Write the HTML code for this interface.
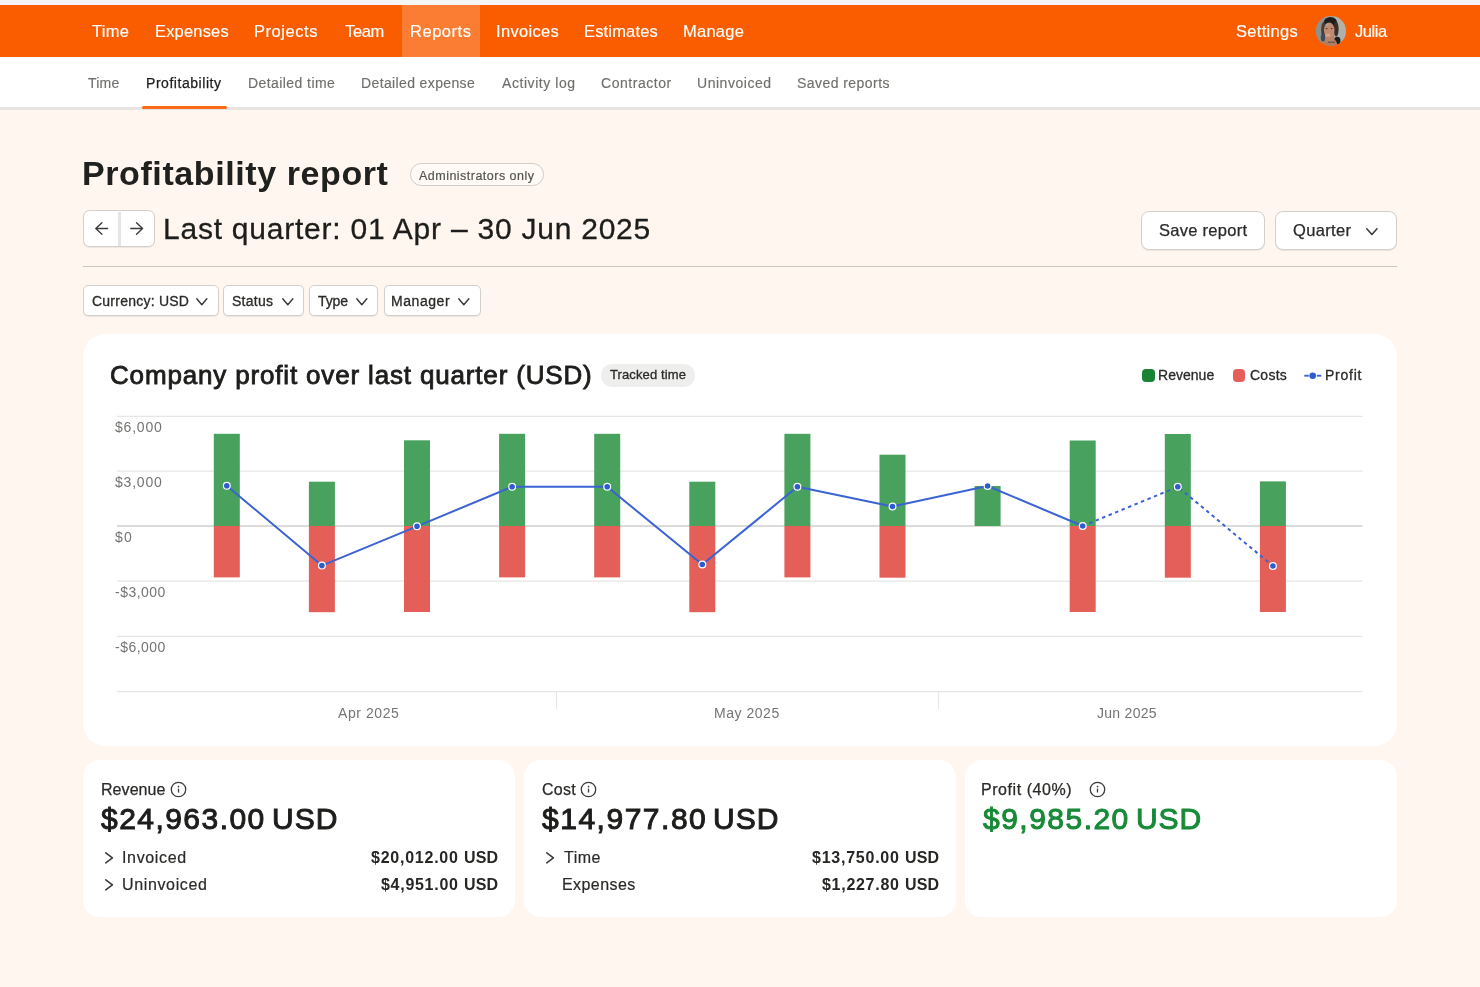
<!DOCTYPE html>
<html lang="en"><head><meta charset="utf-8"><title>Profitability report</title>
<style>
html,body{margin:0;padding:0;}
body{width:1480px;height:987px;overflow:hidden;position:relative;background:#fff6f0;font-family:"Liberation Sans",Arial,sans-serif;}
.t{will-change:transform;position:absolute;white-space:pre;display:block;}
.abs{position:absolute;box-sizing:border-box;}
.btn{position:absolute;box-sizing:border-box;background:#fff;border:1px solid #d3d0cc;border-radius:6px;box-shadow:0 1px 1px rgba(0,0,0,.07);}
.card{position:absolute;background:#fff;}
svg{position:absolute;overflow:visible;}

</style></head>
<body>
<div class="abs" style="left:0;top:0;width:1480px;height:5px;background:#f5f5f5"></div>
<div class="abs" style="left:0;top:5px;width:1480px;height:51.5px;background:#fa5d00"></div>
<div class="abs" style="left:402px;top:5px;width:78px;height:51.5px;background:#fb7d33"></div>
<div class="abs" style="left:0;top:56.5px;width:1480px;height:50.5px;background:#fff"></div>
<div class="abs" style="left:0;top:107px;width:1480px;height:2.5px;background:#e6e3e0"></div>
<div class="abs" style="left:142px;top:106px;width:85px;height:3px;background:#fb6a14;border-radius:1.5px"></div>
<svg style="left:1316px;top:16px" width="30" height="30" viewBox="0 0 30 30">
  <defs><clipPath id="av"><circle cx="15" cy="15" r="14.9"/></clipPath>
  <filter id="avb" x="-20%" y="-20%" width="140%" height="140%"><feGaussianBlur stdDeviation="0.75"/></filter></defs>
  <g clip-path="url(#av)">
    <rect x="-4" y="-4" width="38" height="38" fill="#a3a39c"/>
    <g filter="url(#avb)">
    <rect x="-4" y="-4" width="14" height="38" fill="#8b9295"/>
    <rect x="19" y="-4" width="15" height="38" fill="#b4b2a8"/>
    <rect x="22" y="14" width="12" height="20" fill="#aeb0af"/>
    <ellipse cx="14.4" cy="6.4" rx="6.6" ry="5.4" fill="#1f1c1b"/>
    <ellipse cx="7.6" cy="14" rx="2.4" ry="8" fill="#4b3b36"/>
    <ellipse cx="20.2" cy="13" rx="2.4" ry="7.5" fill="#3b2d28"/>
    <ellipse cx="21.3" cy="24.8" rx="3.2" ry="4" fill="#231d1b"/>
    <ellipse cx="7" cy="21.500" rx="2.200" ry="4" fill="#3f4c53"/>
    <path d="M5 31 Q7 24 12 23 L18 23 Q21 25 22 31 Z" fill="#b27c5e"/>
    <rect x="9.500" y="17" width="8.500" height="9" fill="#b9836a"/>
    <ellipse cx="13.2" cy="14" rx="5.300" ry="7.4" fill="#c18b70"/>
    <ellipse cx="11.800" cy="19.200" rx="2.400" ry="1.600" fill="#dba18e"/>
    <ellipse cx="11.3" cy="8.6" rx="1.600" ry="1.200" fill="#a9a79c"/>
    <ellipse cx="10.6" cy="12.6" rx="1.100" ry="0.600" fill="#5d4035"/>
    <ellipse cx="15.6" cy="12.6" rx="1.100" ry="0.600" fill="#5d4035"/>
    <rect x="12" y="25.500" width="7" height="1.400" fill="#6d5a52"/>
    </g>
  </g>
</svg>
<div class="abs" style="left:410.3px;top:163.2px;width:134.2px;height:22.6px;border:1.2px solid #d0ccc7;border-radius:11.3px;background:#fffaf6"></div>
<div class="btn" style="left:83.2px;top:210.4px;width:72px;height:36.8px;border-radius:6.5px;border-width:1.3px"></div>
<div class="abs" style="left:118.4px;top:211.6px;width:2.2px;height:34.4px;background:#e6e5e3"></div>
<svg style="left:0;top:0" width="200" height="260" viewBox="0 0 200 260" fill="none" stroke="#3a3a38" stroke-width="1.35" stroke-linecap="round" stroke-linejoin="round"><path d="M107.600 228.500H95.800M101.900 222.800L95.800 228.500l6.100 5.700"/><path d="M130.800 228.500h11.800M136.500 222.800l6.100 5.700-6.100 5.700"/></svg>
<div class="btn" style="left:1141px;top:210.5px;width:124px;height:39.5px;border-radius:8px"></div>
<div class="btn" style="left:1275px;top:210.5px;width:121.5px;height:39.5px;border-radius:8px"></div>
<svg style="left:1365.6px;top:227.8px" width="11.8" height="7.2" viewBox="0 0 11.8 7.2" fill="none" stroke="#3a3a38" stroke-width="1.55" stroke-linecap="round" stroke-linejoin="round"><path d="M0.775 0.775L5.9 6.425L11.025 0.775"/></svg>
<div class="abs" style="left:83px;top:266.2px;width:1314px;height:1.2px;background:#cbc6c0"></div>
<div class="btn" style="left:83.2px;top:285.2px;width:135.4px;height:31.2px;border-radius:5px;border-width:1.2px"></div>
<div class="btn" style="left:223.4px;top:285.2px;width:80.7px;height:31.2px;border-radius:5px;border-width:1.2px"></div>
<div class="btn" style="left:309.2px;top:285.2px;width:69.2px;height:31.2px;border-radius:5px;border-width:1.2px"></div>
<div class="btn" style="left:384px;top:285.2px;width:96.5px;height:31.2px;border-radius:5px;border-width:1.2px"></div>
<svg style="left:196.1px;top:297.6px" width="11.6" height="7.4" viewBox="0 0 11.6 7.4" fill="none" stroke="#3a3a38" stroke-width="1.45" stroke-linecap="round" stroke-linejoin="round"><path d="M0.725 0.725L5.8 6.675000000000001L10.875 0.725"/></svg>
<svg style="left:281.5px;top:297.6px" width="11.6" height="7.4" viewBox="0 0 11.6 7.4" fill="none" stroke="#3a3a38" stroke-width="1.45" stroke-linecap="round" stroke-linejoin="round"><path d="M0.725 0.725L5.8 6.675000000000001L10.875 0.725"/></svg>
<svg style="left:356.2px;top:297.6px" width="11.6" height="7.4" viewBox="0 0 11.6 7.4" fill="none" stroke="#3a3a38" stroke-width="1.45" stroke-linecap="round" stroke-linejoin="round"><path d="M0.725 0.725L5.8 6.675000000000001L10.875 0.725"/></svg>
<svg style="left:458.2px;top:297.6px" width="11.6" height="7.4" viewBox="0 0 11.6 7.4" fill="none" stroke="#3a3a38" stroke-width="1.45" stroke-linecap="round" stroke-linejoin="round"><path d="M0.725 0.725L5.8 6.675000000000001L10.875 0.725"/></svg>
<div class="card" style="left:83px;top:333.5px;width:1313.5px;height:412.5px;border-radius:22px"></div>
<div class="abs" style="left:600.5px;top:364px;width:94.9px;height:22.5px;border-radius:11.3px;background:#eeeeed"></div>
<div class="abs" style="left:1142px;top:368.7px;width:12.5px;height:13.5px;border-radius:4px;background:#188433"></div>
<div class="abs" style="left:1232.5px;top:368.7px;width:12.5px;height:13.5px;border-radius:4px;background:#e45f58"></div>
<svg style="left:0;top:0" width="1480" height="987" viewBox="0 0 1480 987">
  <g stroke="#e6e6e5" stroke-width="1.2">
    <line x1="117" x2="1362.500" y1="416.3" y2="416.3"/>
    <line x1="117" x2="1362.500" y1="471.2" y2="471.2"/>
    <line x1="117" x2="1362.500" y1="581.2" y2="581.2"/>
    <line x1="117" x2="1362.500" y1="636.4" y2="636.4"/>
    <line x1="117" x2="1362.500" y1="691.6" y2="691.6"/>
    <line x1="556.5" x2="556.5" y1="691.6" y2="709"/>
    <line x1="938.5" x2="938.5" y1="691.6" y2="709"/>
  </g>
  <line x1="117" x2="1362.500" y1="526" y2="526" stroke="#cfcfce" stroke-width="1.5"/>
  <g><rect x="213.8" y="433.8" width="26" height="92.2" fill="#48a15c"/><rect x="213.8" y="526" width="26" height="51.4" fill="#e45f58"/><rect x="308.9" y="481.7" width="26" height="44.3" fill="#48a15c"/><rect x="308.9" y="526" width="26" height="86.2" fill="#e45f58"/><rect x="404.0" y="440.3" width="26" height="85.7" fill="#48a15c"/><rect x="404.0" y="526" width="26" height="86.0" fill="#e45f58"/><rect x="499.1" y="433.8" width="26" height="92.2" fill="#48a15c"/><rect x="499.1" y="526" width="26" height="51.4" fill="#e45f58"/><rect x="594.2" y="433.8" width="26" height="92.2" fill="#48a15c"/><rect x="594.2" y="526" width="26" height="51.4" fill="#e45f58"/><rect x="689.3" y="481.7" width="26" height="44.3" fill="#48a15c"/><rect x="689.3" y="526" width="26" height="86.2" fill="#e45f58"/><rect x="784.4" y="433.8" width="26" height="92.2" fill="#48a15c"/><rect x="784.4" y="526" width="26" height="51.4" fill="#e45f58"/><rect x="879.5" y="454.7" width="26" height="71.3" fill="#48a15c"/><rect x="879.5" y="526" width="26" height="51.7" fill="#e45f58"/><rect x="974.6" y="486" width="26" height="40.0" fill="#48a15c"/><rect x="1069.7" y="440.5" width="26" height="85.5" fill="#48a15c"/><rect x="1069.7" y="526" width="26" height="86.0" fill="#e45f58"/><rect x="1164.8" y="434" width="26" height="92.0" fill="#48a15c"/><rect x="1164.8" y="526" width="26" height="51.7" fill="#e45f58"/><rect x="1259.9" y="481.4" width="26" height="44.6" fill="#48a15c"/><rect x="1259.9" y="526" width="26" height="86.0" fill="#e45f58"/></g>
  <polyline fill="none" stroke="#3b63d1" stroke-width="2" stroke-linejoin="round" points="226.8,485.7 321.9,565.6 417.0,526.3 512.1,486.8 607.2,486.8 702.3,564.5 797.4,486.8 892.5,506.5 987.6,486 1082.7,526"/>
  <polyline fill="none" stroke="#3b63d1" stroke-width="2" stroke-dasharray="3.5 3.5" points="1082.7,526 1177.8,486.8 1272.9,566"/>
  <g fill="#2f5bd0" stroke="#ffffff" stroke-width="1.2"><circle cx="226.8" cy="485.7" r="3.4"/><circle cx="321.9" cy="565.6" r="3.4"/><circle cx="417.0" cy="526.3" r="3.4"/><circle cx="512.1" cy="486.8" r="3.4"/><circle cx="607.2" cy="486.8" r="3.4"/><circle cx="702.3" cy="564.5" r="3.4"/><circle cx="797.4" cy="486.8" r="3.4"/><circle cx="892.5" cy="506.5" r="3.4"/><circle cx="987.6" cy="486" r="3.4"/><circle cx="1082.7" cy="526" r="3.4"/><circle cx="1177.8" cy="486.8" r="3.4"/><circle cx="1272.9" cy="566" r="3.4"/></g>
  <g stroke="#3b63d1" stroke-width="1.9"><line x1="1304.300" x2="1308.800" y1="375.700" y2="375.700"/><line x1="1316.800" x2="1321.300" y1="375.700" y2="375.700"/></g>
  <circle cx="1312.700" cy="375.700" r="3.300" fill="#2f5bd0"/>
</svg>
<div class="card" style="left:83px;top:760px;width:432px;height:156.500px;border-radius:17px"></div>
<div class="card" style="left:524px;top:760px;width:432px;height:156.500px;border-radius:17px"></div>
<div class="card" style="left:964.5px;top:760px;width:432px;height:156.500px;border-radius:17px"></div>
<svg style="left:169.9px;top:780.9px" width="17" height="17" viewBox="0 0 17 17"><circle cx="8.5" cy="8.5" r="7.2" fill="none" stroke="#3a3a38" stroke-width="1.3"/><rect x="7.85" y="7.6" width="1.3" height="3.9" fill="#3a3a38"/><circle cx="8.5" cy="5.6" r="0.85" fill="#3a3a38"/></svg>
<svg style="left:580.3px;top:780.9px" width="17" height="17" viewBox="0 0 17 17"><circle cx="8.5" cy="8.5" r="7.2" fill="none" stroke="#3a3a38" stroke-width="1.3"/><rect x="7.85" y="7.6" width="1.3" height="3.9" fill="#3a3a38"/><circle cx="8.5" cy="5.6" r="0.85" fill="#3a3a38"/></svg>
<svg style="left:1088.8px;top:780.9px" width="17" height="17" viewBox="0 0 17 17"><circle cx="8.5" cy="8.5" r="7.2" fill="none" stroke="#3a3a38" stroke-width="1.3"/><rect x="7.85" y="7.6" width="1.3" height="3.9" fill="#3a3a38"/><circle cx="8.5" cy="5.6" r="0.85" fill="#3a3a38"/></svg>
<svg style="left:104.7px;top:851.7px" width="8.2" height="11.6" viewBox="0 0 8.2 11.6" fill="none" stroke="#3a3a38" stroke-width="1.55" stroke-linecap="round" stroke-linejoin="round"><path d="M0.775 0.775L7.424999999999999 5.8L0.775 10.825"/></svg>
<svg style="left:104.7px;top:878.8px" width="8.2" height="11.6" viewBox="0 0 8.2 11.6" fill="none" stroke="#3a3a38" stroke-width="1.55" stroke-linecap="round" stroke-linejoin="round"><path d="M0.775 0.775L7.424999999999999 5.8L0.775 10.825"/></svg>
<svg style="left:545.8px;top:851.7px" width="8.2" height="11.6" viewBox="0 0 8.2 11.6" fill="none" stroke="#3a3a38" stroke-width="1.55" stroke-linecap="round" stroke-linejoin="round"><path d="M0.775 0.775L7.424999999999999 5.8L0.775 10.825"/></svg>

<span class="t" style="left:92.20px;top:20px;font-size:16.5px;line-height:22px;height:22px;font-weight:400;color:#ffffff;letter-spacing:0.274px;-webkit-text-stroke:0.15px #ffffff;">Time</span>
<span class="t" style="left:154.70px;top:20px;font-size:16.5px;line-height:22px;height:22px;font-weight:400;color:#ffffff;letter-spacing:0.170px;-webkit-text-stroke:0.15px #ffffff;">Expenses</span>
<span class="t" style="left:254.10px;top:20px;font-size:16.5px;line-height:22px;height:22px;font-weight:400;color:#ffffff;letter-spacing:0.550px;-webkit-text-stroke:0.15px #ffffff;">Projects</span>
<span class="t" style="left:345.40px;top:20px;font-size:16.5px;line-height:22px;height:22px;font-weight:400;color:#ffffff;letter-spacing:-0.334px;-webkit-text-stroke:0.15px #ffffff;">Team</span>
<span class="t" style="left:409.80px;top:20px;font-size:16.5px;line-height:22px;height:22px;font-weight:400;color:#ffffff;letter-spacing:0.529px;-webkit-text-stroke:0.15px #ffffff;">Reports</span>
<span class="t" style="left:495.80px;top:20px;font-size:16.5px;line-height:22px;height:22px;font-weight:400;color:#ffffff;letter-spacing:0.317px;-webkit-text-stroke:0.15px #ffffff;">Invoices</span>
<span class="t" style="left:584.10px;top:20px;font-size:16.5px;line-height:22px;height:22px;font-weight:400;color:#ffffff;letter-spacing:0.164px;-webkit-text-stroke:0.15px #ffffff;">Estimates</span>
<span class="t" style="left:683.40px;top:20px;font-size:16.5px;line-height:22px;height:22px;font-weight:400;color:#ffffff;letter-spacing:0.250px;-webkit-text-stroke:0.15px #ffffff;">Manage</span>
<span class="t" style="left:1236.40px;top:20px;font-size:16.5px;line-height:22px;height:22px;font-weight:400;color:#ffffff;letter-spacing:0.290px;-webkit-text-stroke:0.15px #ffffff;">Settings</span>
<span class="t" style="left:1355.00px;top:20px;font-size:16.5px;line-height:22px;height:22px;font-weight:400;color:#ffffff;letter-spacing:-0.440px;-webkit-text-stroke:0.15px #ffffff;">Julia</span>
<span class="t" style="left:88.10px;top:73px;font-size:14px;line-height:20px;height:20px;font-weight:400;color:#6f6f6c;letter-spacing:0.198px;-webkit-text-stroke:0.15px #6f6f6c;">Time</span>
<span class="t" style="left:247.60px;top:73px;font-size:14px;line-height:20px;height:20px;font-weight:400;color:#6f6f6c;letter-spacing:0.424px;-webkit-text-stroke:0.15px #6f6f6c;">Detailed time</span>
<span class="t" style="left:360.60px;top:73px;font-size:14px;line-height:20px;height:20px;font-weight:400;color:#6f6f6c;letter-spacing:0.373px;-webkit-text-stroke:0.15px #6f6f6c;">Detailed expense</span>
<span class="t" style="left:501.50px;top:73px;font-size:14px;line-height:20px;height:20px;font-weight:400;color:#6f6f6c;letter-spacing:0.561px;-webkit-text-stroke:0.15px #6f6f6c;">Activity log</span>
<span class="t" style="left:601.10px;top:73px;font-size:14px;line-height:20px;height:20px;font-weight:400;color:#6f6f6c;letter-spacing:0.534px;-webkit-text-stroke:0.15px #6f6f6c;">Contractor</span>
<span class="t" style="left:697.30px;top:73px;font-size:14px;line-height:20px;height:20px;font-weight:400;color:#6f6f6c;letter-spacing:0.536px;-webkit-text-stroke:0.15px #6f6f6c;">Uninvoiced</span>
<span class="t" style="left:797.30px;top:73px;font-size:14px;line-height:20px;height:20px;font-weight:400;color:#6f6f6c;letter-spacing:0.445px;-webkit-text-stroke:0.15px #6f6f6c;">Saved reports</span>
<span class="t" style="left:146.00px;top:73px;font-size:14px;line-height:20px;height:20px;font-weight:400;color:#1d1e1c;letter-spacing:0.544px;-webkit-text-stroke:0.25px #1d1e1c;">Profitability</span>
<span class="t" style="left:81.80px;top:152px;font-size:34px;line-height:42px;height:42px;font-weight:700;color:#20211f;letter-spacing:0.591px;">Profitability report</span>
<span class="t" style="left:419.20px;top:167px;font-size:12.5px;line-height:18px;height:18px;font-weight:400;color:#55554f;letter-spacing:0.481px;-webkit-text-stroke:0.2px #55554f;">Administrators only</span>
<span class="t" style="left:163.40px;top:210px;font-size:30px;line-height:37px;height:37px;font-weight:400;color:#1d1e1c;letter-spacing:0.765px;-webkit-text-stroke:0.3px #1d1e1c;">Last quarter: 01 Apr – 30 Jun 2025</span>
<span class="t" style="left:1158.50px;top:219px;font-size:16.5px;line-height:22px;height:22px;font-weight:400;color:#2a2a28;letter-spacing:0.279px;-webkit-text-stroke:0.25px #2a2a28;">Save report</span>
<span class="t" style="left:1292.50px;top:219px;font-size:16.5px;line-height:22px;height:22px;font-weight:400;color:#2a2a28;letter-spacing:0.343px;-webkit-text-stroke:0.25px #2a2a28;">Quarter</span>
<span class="t" style="left:91.60px;top:291px;font-size:14px;line-height:20px;height:20px;font-weight:400;color:#2a2a28;letter-spacing:0.232px;-webkit-text-stroke:0.3px #2a2a28;">Currency: USD</span>
<span class="t" style="left:232.10px;top:291px;font-size:14px;line-height:20px;height:20px;font-weight:400;color:#2a2a28;letter-spacing:0.282px;-webkit-text-stroke:0.3px #2a2a28;">Status</span>
<span class="t" style="left:318.20px;top:291px;font-size:14px;line-height:20px;height:20px;font-weight:400;color:#2a2a28;letter-spacing:-0.122px;-webkit-text-stroke:0.3px #2a2a28;">Type</span>
<span class="t" style="left:391.10px;top:291px;font-size:14px;line-height:20px;height:20px;font-weight:400;color:#2a2a28;letter-spacing:0.551px;-webkit-text-stroke:0.3px #2a2a28;">Manager</span>
<span class="t" style="left:109.80px;top:358px;font-size:26px;line-height:34px;height:34px;font-weight:400;color:#1d1e1c;letter-spacing:0.836px;-webkit-text-stroke:0.85px #1d1e1c;">Company profit over last quarter (USD)</span>
<span class="t" style="left:609.80px;top:365px;font-size:13px;line-height:19px;height:19px;font-weight:400;color:#2a2a28;letter-spacing:0.117px;-webkit-text-stroke:0.3px #2a2a28;">Tracked time</span>
<span class="t" style="left:1157.80px;top:365px;font-size:14px;line-height:20px;height:20px;font-weight:400;color:#2a2a28;letter-spacing:0.024px;-webkit-text-stroke:0.3px #2a2a28;">Revenue</span>
<span class="t" style="left:1249.60px;top:365px;font-size:14px;line-height:20px;height:20px;font-weight:400;color:#2a2a28;letter-spacing:0.253px;-webkit-text-stroke:0.3px #2a2a28;">Costs</span>
<span class="t" style="left:1325.00px;top:365px;font-size:14px;line-height:20px;height:20px;font-weight:400;color:#2a2a28;letter-spacing:0.763px;-webkit-text-stroke:0.3px #2a2a28;">Profit</span>
<span class="t" style="left:114.50px;top:417px;font-size:14px;line-height:20px;height:20px;font-weight:400;color:#747472;letter-spacing:0.793px;">$6,000</span>
<span class="t" style="left:114.50px;top:472px;font-size:14px;line-height:20px;height:20px;font-weight:400;color:#747472;letter-spacing:0.793px;">$3,000</span>
<span class="t" style="left:114.50px;top:527px;font-size:14px;line-height:20px;height:20px;font-weight:400;color:#747472;letter-spacing:1.214px;">$0</span>
<span class="t" style="left:114.50px;top:582px;font-size:14px;line-height:20px;height:20px;font-weight:400;color:#747472;letter-spacing:0.467px;">-$3,000</span>
<span class="t" style="left:114.50px;top:637px;font-size:14px;line-height:20px;height:20px;font-weight:400;color:#747472;letter-spacing:0.467px;">-$6,000</span>
<span class="t" style="left:337.70px;top:703px;font-size:14px;line-height:20px;height:20px;font-weight:400;color:#747472;letter-spacing:0.567px;">Apr 2025</span>
<span class="t" style="left:714.30px;top:703px;font-size:14px;line-height:20px;height:20px;font-weight:400;color:#747472;letter-spacing:0.529px;">May 2025</span>
<span class="t" style="left:1096.50px;top:703px;font-size:14px;line-height:20px;height:20px;font-weight:400;color:#747472;letter-spacing:0.283px;">Jun 2025</span>
<span class="t" style="left:100.50px;top:779px;font-size:16px;line-height:21px;height:21px;font-weight:400;color:#2a2a28;letter-spacing:0.059px;-webkit-text-stroke:0.25px #2a2a28;">Revenue</span>
<span class="t" style="left:101.30px;top:800px;font-size:30px;line-height:37px;height:37px;font-weight:400;color:#1d1e1c;letter-spacing:1.460px;-webkit-text-stroke:1.0px #1d1e1c;">$24,963.00</span>
<span class="t" style="left:272.10px;top:800px;font-size:30px;line-height:37px;height:37px;font-weight:400;color:#1d1e1c;letter-spacing:1.013px;-webkit-text-stroke:1.0px #1d1e1c;">USD</span>
<span class="t" style="left:121.60px;top:847px;font-size:16px;line-height:21px;height:21px;font-weight:400;color:#2a2a28;letter-spacing:0.644px;-webkit-text-stroke:0.2px #2a2a28;">Invoiced</span>
<span class="t" style="left:121.60px;top:874px;font-size:16px;line-height:21px;height:21px;font-weight:400;color:#2a2a28;letter-spacing:0.638px;-webkit-text-stroke:0.2px #2a2a28;">Uninvoiced</span>
<span class="t" style="left:370.80px;top:847px;font-size:16px;line-height:21px;height:21px;font-weight:700;color:#262624;letter-spacing:0.758px;">$20,012.00</span>
<span class="t" style="left:463.80px;top:847px;font-size:16px;line-height:21px;height:21px;font-weight:700;color:#262624;letter-spacing:0.137px;">USD</span>
<span class="t" style="left:380.80px;top:874px;font-size:16px;line-height:21px;height:21px;font-weight:700;color:#262624;letter-spacing:0.715px;">$4,951.00</span>
<span class="t" style="left:463.80px;top:874px;font-size:16px;line-height:21px;height:21px;font-weight:700;color:#262624;letter-spacing:0.137px;">USD</span>
<span class="t" style="left:541.70px;top:779px;font-size:16px;line-height:21px;height:21px;font-weight:400;color:#2a2a28;letter-spacing:0.249px;-webkit-text-stroke:0.25px #2a2a28;">Cost</span>
<span class="t" style="left:542.00px;top:800px;font-size:30px;line-height:37px;height:37px;font-weight:400;color:#1d1e1c;letter-spacing:1.515px;-webkit-text-stroke:1.0px #1d1e1c;">$14,977.80</span>
<span class="t" style="left:713.10px;top:800px;font-size:30px;line-height:37px;height:37px;font-weight:400;color:#1d1e1c;letter-spacing:1.013px;-webkit-text-stroke:1.0px #1d1e1c;">USD</span>
<span class="t" style="left:563.50px;top:847px;font-size:16px;line-height:21px;height:21px;font-weight:400;color:#2a2a28;letter-spacing:0.513px;-webkit-text-stroke:0.2px #2a2a28;">Time</span>
<span class="t" style="left:562.00px;top:874px;font-size:16px;line-height:21px;height:21px;font-weight:400;color:#2a2a28;letter-spacing:0.433px;-webkit-text-stroke:0.2px #2a2a28;">Expenses</span>
<span class="t" style="left:811.80px;top:847px;font-size:16px;line-height:21px;height:21px;font-weight:700;color:#262624;letter-spacing:0.758px;">$13,750.00</span>
<span class="t" style="left:904.80px;top:847px;font-size:16px;line-height:21px;height:21px;font-weight:700;color:#262624;letter-spacing:0.137px;">USD</span>
<span class="t" style="left:821.80px;top:874px;font-size:16px;line-height:21px;height:21px;font-weight:700;color:#262624;letter-spacing:0.715px;">$1,227.80</span>
<span class="t" style="left:904.80px;top:874px;font-size:16px;line-height:21px;height:21px;font-weight:700;color:#262624;letter-spacing:0.137px;">USD</span>
<span class="t" style="left:981.40px;top:779px;font-size:16px;line-height:21px;height:21px;font-weight:400;color:#2a2a28;letter-spacing:0.551px;-webkit-text-stroke:0.25px #2a2a28;">Profit (40%)</span>
<span class="t" style="left:982.90px;top:800px;font-size:30px;line-height:37px;height:37px;font-weight:400;color:#188a38;letter-spacing:1.478px;-webkit-text-stroke:1.0px #188a38;">$9,985.20</span>
<span class="t" style="left:1135.50px;top:800px;font-size:30px;line-height:37px;height:37px;font-weight:400;color:#188a38;letter-spacing:0.863px;-webkit-text-stroke:1.0px #188a38;">USD</span>
</body></html>
